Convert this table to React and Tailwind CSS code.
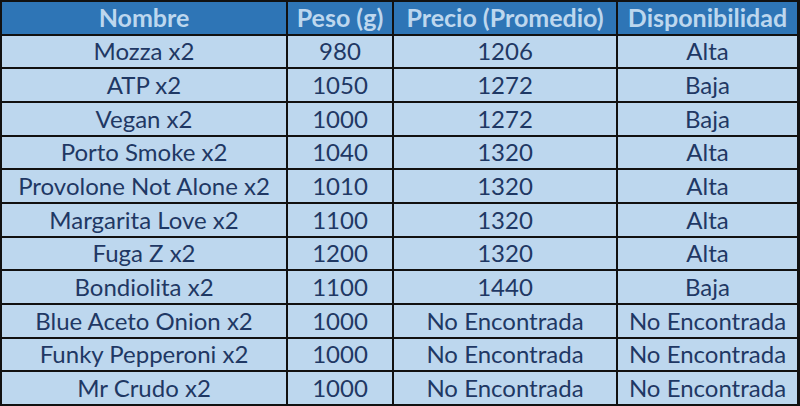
const headers = ['Nombre', 'Peso (g)', 'Precio (Promedio)', 'Disponibilidad'];

const rows = [
  ['Mozza x2', '980', '1206', 'Alta'],
  ['ATP x2', '1050', '1272', 'Baja'],
  ['Vegan x2', '1000', '1272', 'Baja'],
  ['Porto Smoke x2', '1040', '1320', 'Alta'],
  ['Provolone Not Alone x2', '1010', '1320', 'Alta'],
  ['Margarita Love x2', '1100', '1320', 'Alta'],
  ['Fuga Z x2', '1200', '1320', 'Alta'],
  ['Bondiolita x2', '1100', '1440', 'Baja'],
  ['Blue Aceto Onion x2', '1000', 'No Encontrada', 'No Encontrada'],
  ['Funky Pepperoni x2', '1000', 'No Encontrada', 'No Encontrada'],
  ['Mr Crudo x2', '1000', 'No Encontrada', 'No Encontrada'],
];

export default function App() {
  return (
    <div
      className="w-[800px] h-[406px] bg-[#111] pt-[2px] pl-[2px] pr-[3px] pb-[2px] grid grid-cols-[284px_104px_222px_1fr] grid-rows-12 gap-[2px] text-[24px] leading-none"
      style={{ fontFamily: 'Lato, "Open Sans", sans-serif' }}
    >
      {headers.map((h) => (
        <div
          key={h}
          className="bg-[#2e75b6] text-[#bdd7ee] text-[25px] font-bold flex items-center justify-center whitespace-nowrap"
        >
          {h}
        </div>
      ))}
      {rows.map((row) =>
        row.map((cell, i) => (
          <div
            key={row[0] + i}
            className="bg-[#bdd7ee] text-[#1f3864] flex items-center justify-center whitespace-nowrap"
          >
            {cell}
          </div>
        ))
      )}
    </div>
  );
}
